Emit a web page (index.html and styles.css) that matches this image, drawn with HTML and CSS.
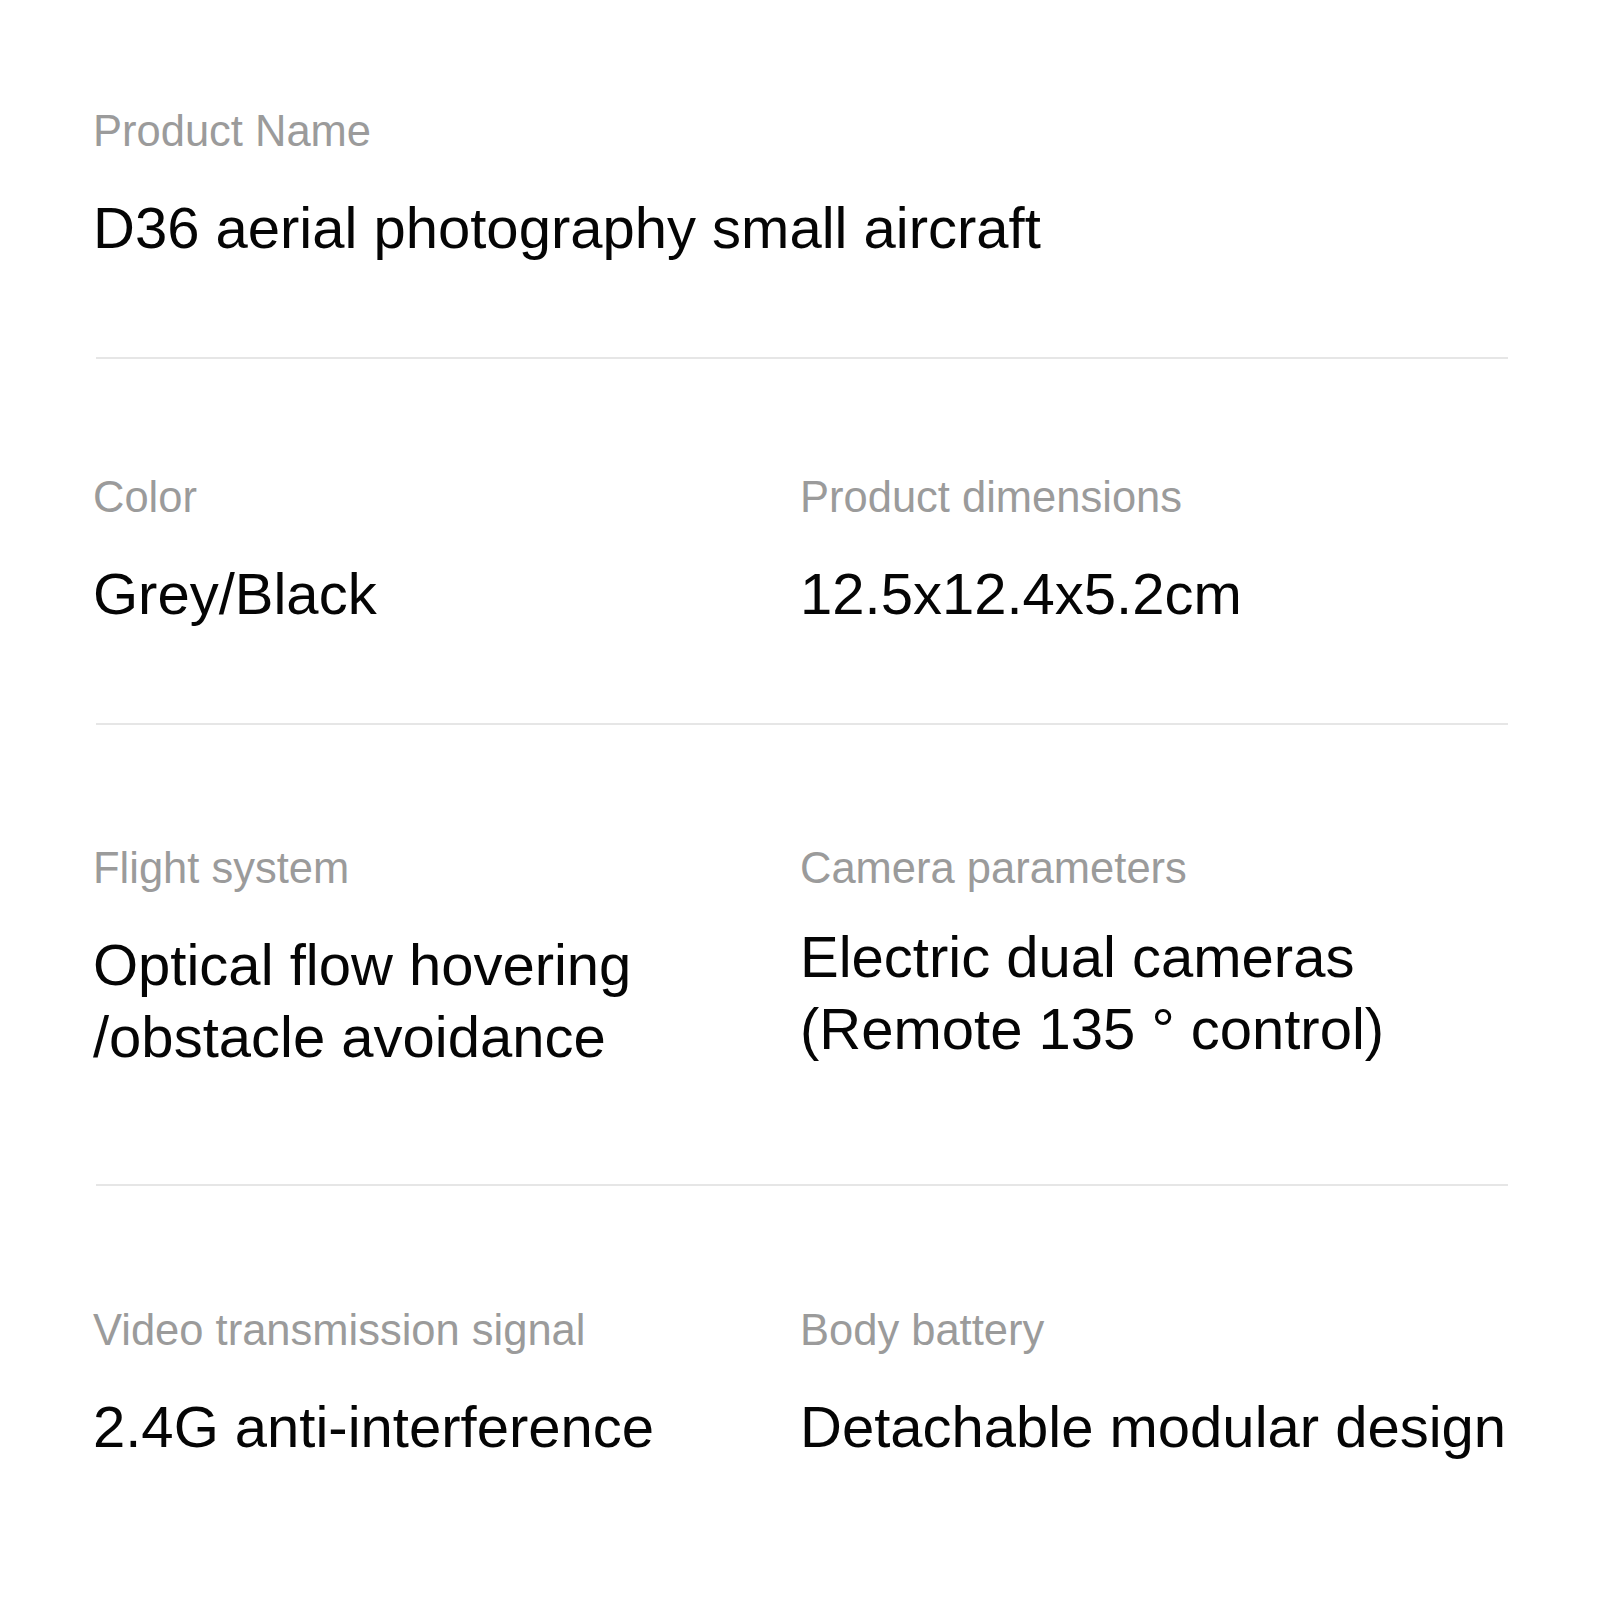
FILE: index.html
```html
<!DOCTYPE html>
<html lang="en">
<head>
    <meta charset="UTF-8">
    <meta name="viewport" content="width=device-width, initial-scale=1.0">
    <title>D36 specifications</title>
    <link rel="stylesheet" href="styles.css">
</head>
<body>
    <div class="specs">
        <section class="row first">
            <div class="item wide">
                <div class="label">Product Name</div>
                <div class="value">D36 aerial photography small aircraft</div>
            </div>
        </section>

        <section class="row">
            <div class="item">
                <div class="label">Color</div>
                <div class="value">Grey/Black</div>
            </div>
            <div class="item">
                <div class="label">Product dimensions</div>
                <div class="value">12.5x12.4x5.2cm</div>
            </div>
        </section>

        <section class="row tall">
            <div class="item">
                <div class="label">Flight system</div>
                <div class="value">Optical flow hovering<br>/obstacle avoidance</div>
            </div>
            <div class="item">
                <div class="label">Camera parameters</div>
                <div class="value raised">Electric dual cameras<br>(Remote 135 ° control)</div>
            </div>
        </section>

        <section class="row last">
            <div class="item">
                <div class="label">Video transmission signal</div>
                <div class="value">2.4G anti-interference</div>
            </div>
            <div class="item">
                <div class="label">Body battery</div>
                <div class="value">Detachable modular design</div>
            </div>
        </section>
    </div>
</body>
</html>
```

FILE: styles.css
```css
body {
    margin: 0;
    background-color: #fff;
    font-family: "Liberation Sans", Arial, sans-serif;
    color: #000;
}
.specs {
    padding: 0 92px 0 96px;
}
.row {
    display: grid;
    grid-template-columns: 707px 1fr;
    padding: 113px 0 93px;
    border-bottom: 2px solid #e6e6e6;
}
.row.first {
    padding-top: 106px;
}
.row.tall {
    padding-top: 118px;
    padding-bottom: 111px;
}
.row.last {
    padding-top: 119px;
    border-bottom: none;
}
.item {
    margin-left: -3px;
}
.item.wide {
    grid-column: 1 / -1;
}
.label {
    font-size: 43.5px;
    line-height: 50px;
    color: #9b9b9b;
}
.value {
    margin-top: 36px;
    font-size: 58px;
    line-height: 72px;
    color: #050505;
}
.value.raised {
    margin-top: 28px;
}
```
